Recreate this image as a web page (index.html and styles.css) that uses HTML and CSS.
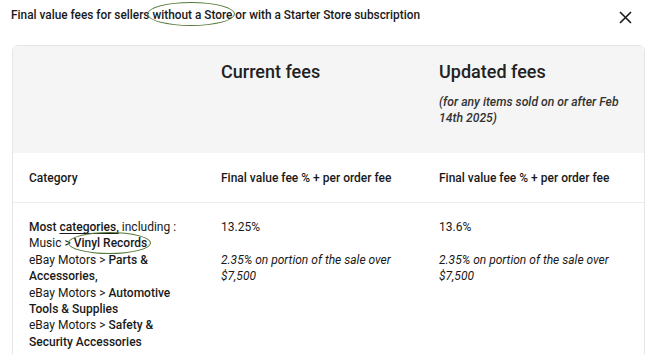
FILE: index.html
```html
<!DOCTYPE html>
<html>
<head>
<meta charset="utf-8">
<link rel="stylesheet" href="styles.css">
</head>
<body>
<div class="dialog">
  <div class="top">
    <h1 class="title">Final value fees for sellers <span class="mark mark-store">without a Store</span> or with a Starter Store subscription</h1>
    <button class="close" aria-label="Close">
      <svg width="13" height="13" viewBox="0 0 13 13"><path d="M1 1L12 12M12 1L1 12" stroke="#191919" stroke-width="1.6" fill="none"/></svg>
    </button>
  </div>
  <div class="table">
    <div class="row head">
      <div class="cell"></div>
      <div class="cell"><h2 class="col-title">Current fees</h2></div>
      <div class="cell"><h2 class="col-title">Updated fees</h2><p class="note">(for any items sold on or after Feb 14th 2025)</p></div>
    </div>
    <div class="row sub">
      <div class="cell">Category</div>
      <div class="cell">Final value fee % + per order fee</div>
      <div class="cell">Final value fee % + per order fee</div>
    </div>
    <div class="row body">
      <div class="cell cat">
        <div><b>Most <u>categories,</u></b> including :</div>
        <div>Music &gt; <span class="mark mark-vinyl"><b>Vinyl Records</b></span></div>
        <div>eBay Motors &gt; <b>Parts &amp;</b><br><b>Accessories,</b></div>
        <div>eBay Motors &gt; <b>Automotive</b><br><b>Tools &amp; Supplies</b></div>
        <div>eBay Motors &gt; <b>Safety &amp;</b><br><b>Security Accessories</b></div>
      </div>
      <div class="cell">
        <p class="rate">13.25%</p>
        <p class="extra">2.35% on portion of the sale over $7,500</p>
      </div>
      <div class="cell">
        <p class="rate">13.6%</p>
        <p class="extra">2.35% on portion of the sale over $7,500</p>
      </div>
    </div>
  </div>
</div>
</body>
</html>
```
FILE: styles.css
```css
* { box-sizing: border-box; }
html, body { margin: 0; padding: 0; background: #fff; }
body {
  font-family: "Roboto", "Noto Sans", sans-serif;
  color: #191919;
  width: 648px;
  height: 354px;
  overflow: hidden;
}
.dialog { padding: 7px 0 0 0; }
.top {
  display: flex;
  justify-content: space-between;
  align-items: flex-start;
  padding: 0 16px 0 11px;
}
.title {
  margin: 0;
  font-size: 11.85px;
  font-weight: 500;
  line-height: 16px;
}
.close {
  border: 0;
  background: none;
  padding: 0;
  margin-top: 4px;
  width: 13px;
  height: 13px;
  display: flex;
}
.mark { position: relative; }
.mark::after {
  content: "";
  position: absolute;
  border: 1px solid #56793a;
  border-radius: 50%;
}
.mark-store::after { left: -5px; right: -3px; top: -6px; bottom: -4px; }
.mark-vinyl::after { left: -6px; right: -4px; top: -4px; bottom: -4px; }

.table {
  margin: 21px 3px 0 12px;
  border: 1px solid #e6e6e6;
  border-radius: 6px;
  overflow: hidden;
}
.row {
  display: grid;
  grid-template-columns: 192px 218px 1fr;
}
.cell { padding-left: 16px; padding-right: 14px; }
.head { background: #f5f5f5; height: 107px; padding-top: 14px; }
.col-title {
  margin: 0;
  font-size: 18px;
  font-weight: 500;
  line-height: 24px;
  color: #222;
}
.note {
  margin: 10px 0 0;
  font-size: 12.2px;
  font-style: italic;
  font-weight: 500;
  line-height: 16px;
  color: #333;
}
.sub {
  height: 50px;
  align-items: center;
  font-size: 12px;
  font-weight: 500;
  border-bottom: 1px solid #ececec;
}
.body {
  padding-top: 16px;
  font-size: 12px;
  line-height: 16.4px;
  padding-bottom: 20px;
}
.cat { padding-right: 12px; }
.cat b { font-weight: 500; }
.cat u { text-decoration-thickness: 1px; text-underline-offset: 2px; }
.rate { margin: 0; }
.extra { margin: 16.4px 0 0; font-style: italic; }
```
